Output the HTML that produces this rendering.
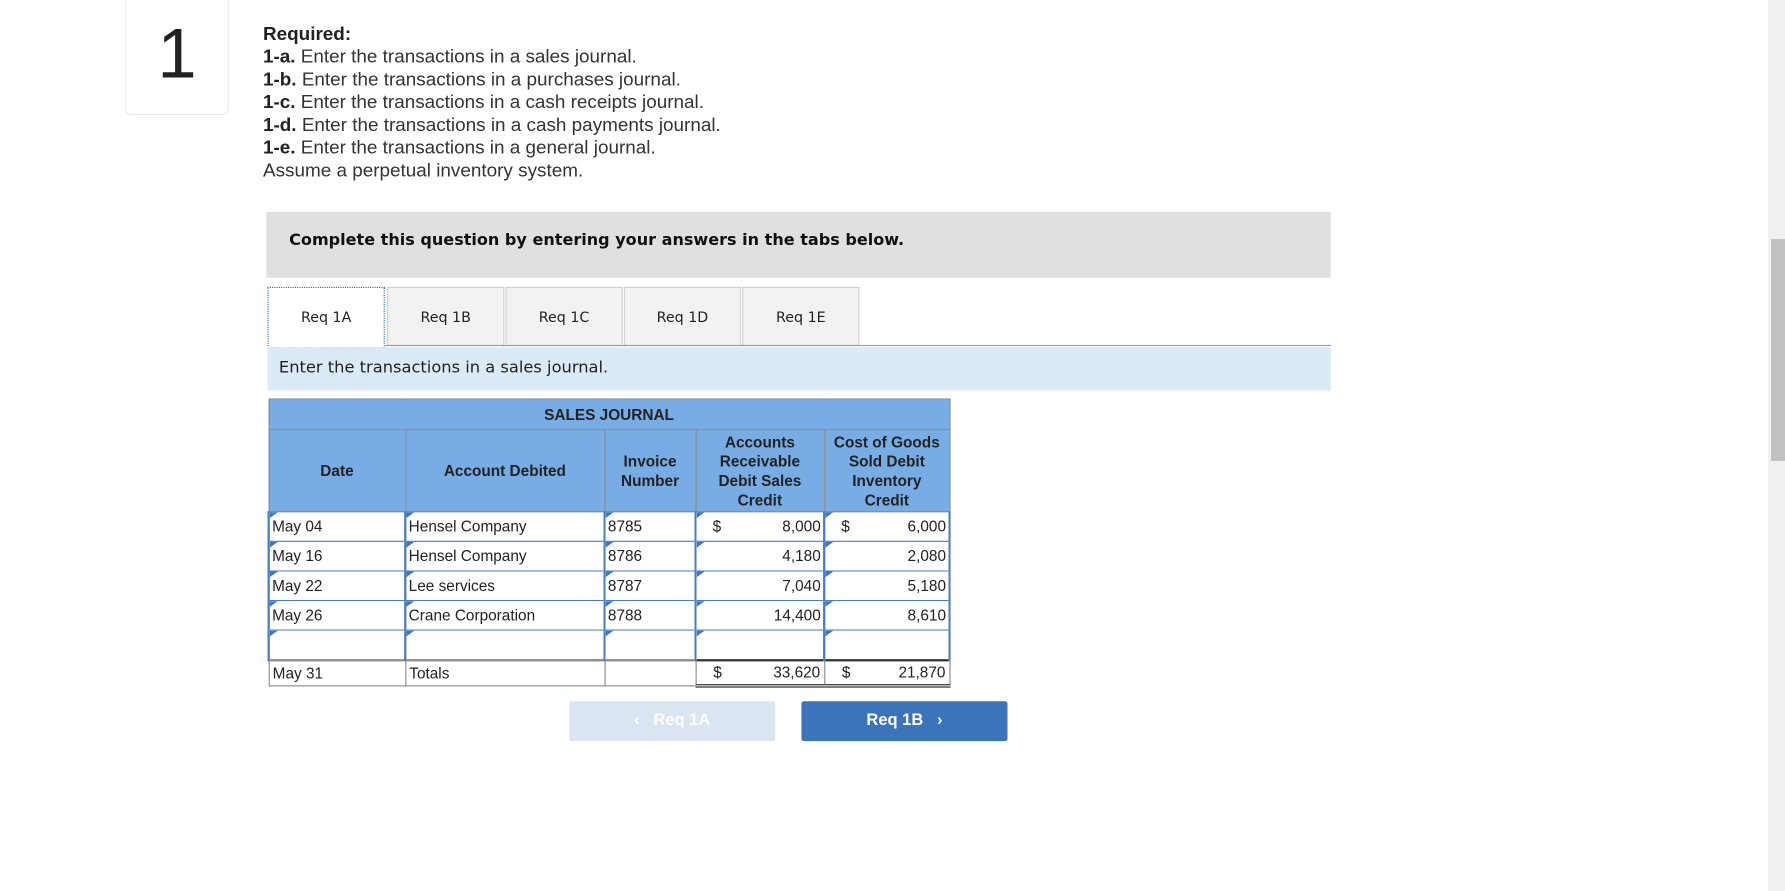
<!DOCTYPE html>
<html><head><meta charset="utf-8"><style>
html,body{margin:0;padding:0;width:1785px;height:891px;overflow:hidden;background:#fff;}
#wrap{position:absolute;left:0;top:0;width:1568px;height:783px;transform:scale(1.1384);transform-origin:0 0;font-family:"Liberation Sans",Arial,sans-serif;color:#333;}
.abs{position:absolute;}
.num{left:110px;top:-6px;width:89px;height:105px;border:1px solid #eaeaea;border-radius:5px;font-size:62px;text-align:center;line-height:106px;color:#222;}
.req{left:231px;top:20px;font-size:16.6px;line-height:20px;color:#333;}
.req b{color:#222}
.gray{left:234px;top:186px;width:935px;height:58px;background:#e0e0e0;}
.gray span{position:absolute;left:20px;top:17px;font-family:"DejaVu Sans",sans-serif;font-weight:bold;font-size:14.1px;color:#111;}
.tab{top:252px;width:101px;height:51px;background:#f2f2f2;border:1px solid #d0d0d0;border-bottom:none;font-family:"DejaVu Sans",sans-serif;font-size:12.5px;text-align:center;line-height:52px;color:#222;}
.tab.act{background:#fff;border:1px dotted #2e6dbf;height:52px;}
.tline{left:338px;top:303px;width:831px;height:1px;background:#999;}
.info{left:235px;top:305px;width:934px;height:38px;background:#dbeaf7;}
.info span{position:absolute;left:10px;top:10px;font-family:"DejaVu Sans",sans-serif;font-size:14.3px;color:#222;}
table{position:absolute;left:235px;top:350px;border-collapse:collapse;table-layout:fixed;width:598px;font-size:13.5px;color:#222;}
td{padding:0;box-sizing:border-box;overflow:hidden;white-space:nowrap;}
th{background:#78ace4;border:1px solid #8a8a8a;font-size:13.5px;font-weight:bold;color:#222;padding:0;line-height:17px;box-sizing:border-box;}
td.c{border:2px solid #4a7dbf;border-top-width:1px;border-bottom-width:1px;background:#fff;height:26px;position:relative;padding:0 2px;}
td.c:before{content:"";position:absolute;left:0;top:0;border-left:7px solid #3f77c4;border-bottom:5px solid transparent;}
td.t{border:1px solid #8a8a8a;height:23px;padding:0 3px;background:#fff;}
.r{text-align:right}
.btn{top:616px;width:181px;height:35px;line-height:35px;text-align:center;font-weight:bold;font-size:14.5px;color:#fff;border-radius:2px;}
#sb{position:absolute;left:1768px;top:0;width:17px;height:891px;background:#f0f0f0;}
#th{position:absolute;left:1771px;top:239px;width:14px;height:222px;background:#c1c1c1;}
</style></head><body>
<div id="wrap">
<div class="abs num">1</div>
<div class="abs req"><b>Required:</b><br><b>1-a.</b> Enter the transactions in a sales journal.<br><b>1-b.</b> Enter the transactions in a purchases journal.<br><b>1-c.</b> Enter the transactions in a cash receipts journal.<br><b>1-d.</b> Enter the transactions in a cash payments journal.<br><b>1-e.</b> Enter the transactions in a general journal.<br>Assume a perpetual inventory system.</div>
<div class="abs gray"><span>Complete this question by entering your answers in the tabs below.</span></div>
<div class="abs tab act" style="left:235px">Req 1A</div>
<div class="abs tab" style="left:340px">Req 1B</div>
<div class="abs tab" style="left:444px">Req 1C</div>
<div class="abs tab" style="left:548px">Req 1D</div>
<div class="abs tab" style="left:652px">Req 1E</div>
<div class="abs tline"></div>
<div class="abs info"><span>Enter the transactions in a sales journal.</span></div>
<table>
<colgroup><col style="width:120px"><col style="width:175px"><col style="width:80px"><col style="width:113px"><col style="width:110px"></colgroup>
<tr><th colspan="5" style="height:27px">SALES JOURNAL</th></tr>
<tr><th style="height:72px">Date</th><th>Account Debited</th><th>Invoice<br>Number</th><th>Accounts<br>Receivable<br>Debit Sales<br>Credit</th><th>Cost of Goods<br>Sold Debit<br>Inventory<br>Credit</th></tr>
<tr><td class="c">May 04</td><td class="c">Hensel Company</td><td class="c">8785</td><td class="c r"><span style="float:left;margin-left:12px">$</span>8,000</td><td class="c r"><span style="float:left;margin-left:12px">$</span>6,000</td></tr>
<tr><td class="c">May 16</td><td class="c">Hensel Company</td><td class="c">8786</td><td class="c r">4,180</td><td class="c r">2,080</td></tr>
<tr><td class="c">May 22</td><td class="c">Lee services</td><td class="c">8787</td><td class="c r">7,040</td><td class="c r">5,180</td></tr>
<tr><td class="c">May 26</td><td class="c">Crane Corporation</td><td class="c">8788</td><td class="c r">14,400</td><td class="c r">8,610</td></tr>
<tr><td class="c" style="height:26px"></td><td class="c"></td><td class="c"></td><td class="c"></td><td class="c"></td></tr>
<tr><td class="t" style="border-top:2px solid #8a8a8a">May 31</td><td class="t" style="border-top:2px solid #8a8a8a">Totals</td><td class="t" style="border-top:2px solid #8a8a8a"></td><td class="t r" style="border-top:2px solid #333;border-bottom:3px double #222"><span style="float:left;margin-left:12px">$</span>33,620</td><td class="t r" style="border-top:2px solid #333;border-bottom:3px double #222"><span style="float:left;margin-left:12px">$</span>21,870</td></tr>
</table>
<div class="abs btn" style="left:500px;background:#dae5f1;">&#8249;&nbsp;&nbsp; Req 1A</div>
<div class="abs btn" style="left:704px;background:#3b74b8;">Req 1B &nbsp;&nbsp;&#8250;</div>
</div>
<div id="sb"></div><div id="th"></div>
</body></html>
